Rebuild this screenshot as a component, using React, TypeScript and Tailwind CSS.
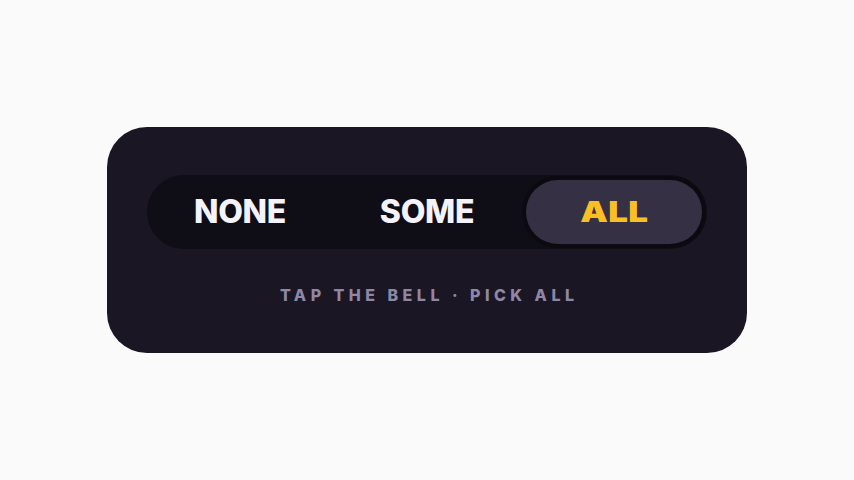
const OPTIONS = ['NONE', 'SOME', 'ALL']

export default function App() {
  const active = 'ALL'

  return (
    <div className="flex h-[480px] w-full items-center justify-center bg-[#fafafa] font-['Inter',sans-serif]">
      <div className="flex w-[640px] flex-col items-center rounded-[40px] bg-[#1a1624] px-10 pb-[50px] pt-12">
        {/* segmented control */}
        <div className="flex w-full gap-[11px] rounded-full bg-[#0f0d15] p-[5px]">
          {OPTIONS.map((opt) => {
            const on = opt === active
            return (
              <div
                key={opt}
                className={
                  on
                    ? 'flex h-16 flex-1 items-center justify-center rounded-full bg-[#363045] text-[#fbbf24] shadow-[0_0_0_4px_#0c0a11]'
                    : 'flex h-16 flex-1 items-center justify-center rounded-full text-[32px] font-extrabold tracking-[-0.01em] text-[#f4f2fa]'
                }
              >
                {on ? (
                  <span className="inline-block scale-x-[1.2] text-[29px] font-black tracking-[0.01em]">{opt}</span>
                ) : (
                  opt
                )}
              </div>
            )
          })}
        </div>

        <div className="mt-[38px] pl-[0.28em] text-[16px] font-extrabold uppercase leading-none tracking-[0.28em] text-[#8f87a6]">
          Tap the bell · Pick all
        </div>
      </div>
    </div>
  )
}
